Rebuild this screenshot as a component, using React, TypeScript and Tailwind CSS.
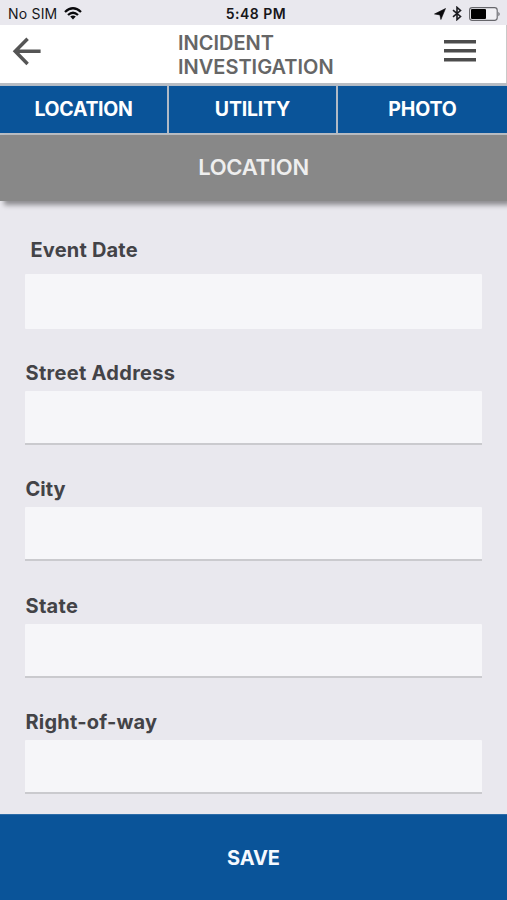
const fields = [
  { label: "Street Address", track: "tracking-[0.3px]" },
  { label: "City", track: "tracking-[0px]" },
  { label: "State", track: "tracking-[0.3px]" },
  { label: "Right-of-way", track: "tracking-[0.2px]" },
];

function StatusBar() {
  return (
    <div className="grid h-[25px] shrink-0 grid-cols-[1fr_auto_1fr] items-center bg-[#e9e8ee] pt-[2px] text-[14px] leading-[20px] text-[#17171a]">
      <div className="flex items-center gap-[7px] pl-[8px]">
        <span className="tracking-[0.2px]">No SIM</span>
        <svg width="18" height="13" viewBox="0 0 18 13" fill="none" stroke="#09090b" strokeWidth="2.3" className="-mt-px">
          <path d="M1 5 Q9 -2.4 17 5" />
          <path d="M4 8 Q9 3.5 14 8" />
          <path d="M6.2 9.6 Q9 7.3 11.8 9.6 L9 12.6 Z" fill="#09090b" stroke="none" />
        </svg>
      </div>
      <span className="pl-[5px] font-semibold tracking-[0.5px]">5:48 PM</span>
      <div className="flex items-center justify-end pr-[6px]">
        <svg width="12" height="12" viewBox="0 0 12 12" className="mr-[6px]">
          <path d="M11.5 0.5 L6.9 11.5 L5.9 6.9 L0.5 6 Z" fill="#09090b" stroke="#09090b" strokeWidth="0.6" />
        </svg>
        <svg width="10" height="15" viewBox="0 0 10 15" fill="none" stroke="#1b1b1f" strokeWidth="1.6" className="mr-[7px]">
          <path d="M1 4.2 L8.5 10.5 L5 13.6 V1.4 L8.5 4.5 L1 10.8" />
        </svg>
        <svg width="32" height="14" viewBox="0 0 32 14">
          <rect x="0.6" y="0.6" width="27.6" height="12.8" rx="2.6" fill="#f1f0f4" stroke="#66666b" strokeWidth="1.1" />
          <rect x="2" y="2" width="15" height="10" rx="1" fill="#000" />
          <path d="M29.4 4.7 Q32 7 29.4 9.3 Z" fill="#66666b" />
        </svg>
      </div>
    </div>
  );
}

function Header() {
  return (
    <header className="flex h-[58px] shrink-0 border-r border-[#c9c9c9] bg-white">
      <button className="ml-[12px] mt-[12px] h-[29px] w-[30px]" aria-label="Back">
        <svg width="30" height="29" viewBox="0 0 30 29" fill="none" stroke="#555" strokeWidth="3.5">
          <path d="M15.6 1.7 L3.2 14.3 L15.6 26.9 M3.2 14.3 H28.6" />
        </svg>
      </button>
      <h1 className="ml-[136px] mt-[6px] w-[180px] text-[20px] font-semibold leading-[24px] text-[#666]">
        <span className="block">INCIDENT</span>
        <span className="block">INVESTIGATION</span>
      </h1>
      <button className="ml-auto mr-[30px] mt-[15px] flex h-[22px] w-[32px] flex-col justify-between" aria-label="Menu">
        <span className="h-[4px] w-full border-b border-[#a5a5a5] bg-[#4c4c4c]" />
        <span className="h-[4px] w-full border-b border-[#a5a5a5] bg-[#4c4c4c]" />
        <span className="h-[4px] w-full border-b border-[#a5a5a5] bg-[#4c4c4c]" />
      </button>
    </header>
  );
}

export default function App() {
  return (
    <div className="flex h-[900px] w-[507px] flex-col overflow-hidden bg-[#e9e8ee] font-['Inter','Liberation_Sans',sans-serif]">
      <StatusBar />
      <Header />
      <nav className="grid h-[51.5px] shrink-0 grid-cols-[167px_167px_1fr] gap-x-[2px] border-y-[2px] border-[#b9bdc3] bg-[#b0bac6] pt-px text-[19.5px] font-bold text-white">
        <button className="bg-[#0a5499] tracking-[-0.3px]">LOCATION</button>
        <button className="bg-[#0a5499] tracking-[-0.2px]">UTILITY</button>
        <button className="bg-[#0a5499] tracking-[-0.1px]">PHOTO</button>
      </nav>
      <h2 className="flex h-[66.5px] shrink-0 items-center justify-center bg-[#888] pb-[1px] text-[22px] font-semibold tracking-[-0.25px] text-[#eee] shadow-[4px_4px_5px_rgba(0,0,0,0.4)]">
        <span>LOCATION</span>
      </h2>
      <main className="flex min-h-0 flex-1 flex-col px-[25px] text-[20px] font-bold leading-[24px] text-[#434347]">
        <div className="mt-[37px]">
          <label className="block pl-[5.5px] tracking-[0.2px]">Event Date</label>
          <div className="mt-[12px] h-[55px] rounded-[1px] bg-[#f6f6f9]" />
        </div>
        {fields.map((field, i) => (
          <div key={field.label} className={i === 0 ? "mt-[32px]" : i === 2 ? "mt-[33px]" : "mt-[32px]"}>
            <label className={"block pl-[0.5px] " + field.track}>{field.label}</label>
            <div className="mt-[6px] h-[54px] rounded-t-[1px] border-b-2 border-[#cacace] bg-[#f6f6f9]" />
          </div>
        ))}
      </main>
      <button className="h-[86px] shrink-0 border-t border-[#2c6ca8] bg-[#0a5499] pt-px text-[20px] font-bold tracking-[-0.1px] text-[#f5f9ff]">
        SAVE
      </button>
    </div>
  );
}
